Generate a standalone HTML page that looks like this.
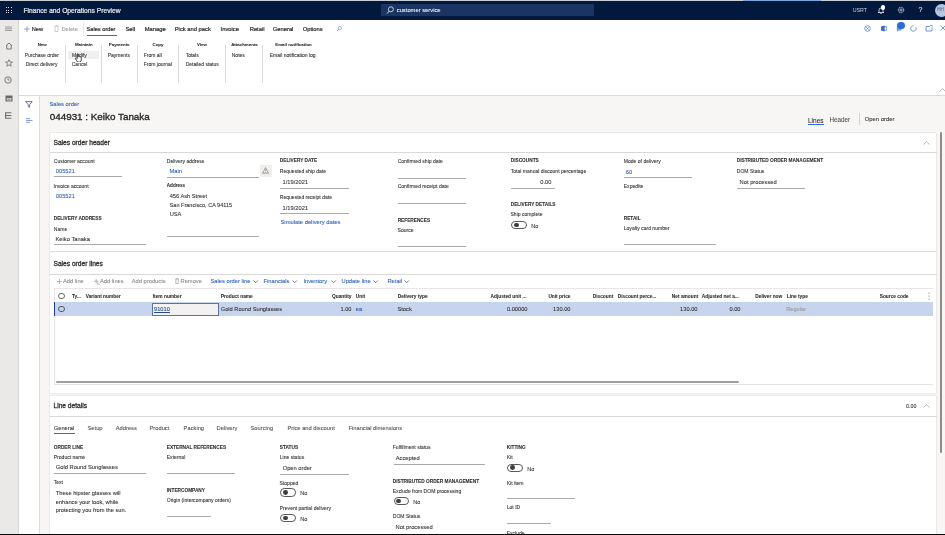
<!DOCTYPE html>
<html><head><meta charset="utf-8"><title>Sales order</title>
<style>
html,body{margin:0;padding:0;}
body{width:945px;height:535px;overflow:hidden;position:relative;font-family:"Liberation Sans",sans-serif;background:#f7f6f5;}
.t{position:absolute;white-space:nowrap;-webkit-text-stroke:0.08px currentColor;}
.r{position:absolute;}
.w{position:absolute;left:0;top:0;width:945px;height:535px;overflow:hidden;will-change:transform;}
</style></head><body>
<div class="w">
<div class="r" style="left:0px;top:0px;width:945px;height:535px;background:#f7f6f5;"></div>
<div class="r" style="left:0px;top:0px;width:945px;height:1px;background:#c9cdd4;"></div>
<div class="r" style="left:743px;top:0px;width:78px;height:1px;background:#7aa6dc;"></div>
<div class="r" style="left:0px;top:1px;width:945px;height:18.6px;background:#02183c;"></div>
<div class="r" style="left:0px;top:19.6px;width:18.6px;height:515.4px;background:#eae9e8;border-right:0.7px solid #d6d5d4;box-sizing:border-box"></div>
<div class="r" style="left:18.6px;top:19.6px;width:926.4px;height:75.7px;background:#ffffff;"></div>
<div class="r" style="left:18.6px;top:95px;width:926.4px;height:1px;background:#dddcdb;"></div>
<div class="r" style="left:18.6px;top:95.9px;width:20.4px;height:439.1px;background:#ffffff;"></div>
<div class="r" style="left:38.9px;top:95.9px;width:0.8px;height:439.1px;background:#dcdbda;"></div>
<div class="r" style="left:5.6px;top:7.4px;width:1.1px;height:1.1px;background:#d8dce4;"></div>
<div class="r" style="left:5.6px;top:9.9px;width:1.1px;height:1.1px;background:#d8dce4;"></div>
<div class="r" style="left:5.6px;top:12.4px;width:1.1px;height:1.1px;background:#d8dce4;"></div>
<div class="r" style="left:8.1px;top:7.4px;width:1.1px;height:1.1px;background:#d8dce4;"></div>
<div class="r" style="left:8.1px;top:9.9px;width:1.1px;height:1.1px;background:#d8dce4;"></div>
<div class="r" style="left:8.1px;top:12.4px;width:1.1px;height:1.1px;background:#d8dce4;"></div>
<div class="r" style="left:10.6px;top:7.4px;width:1.1px;height:1.1px;background:#d8dce4;"></div>
<div class="r" style="left:10.6px;top:9.9px;width:1.1px;height:1.1px;background:#d8dce4;"></div>
<div class="r" style="left:10.6px;top:12.4px;width:1.1px;height:1.1px;background:#d8dce4;"></div>
<div class="t" style="left:23.5px;top:6.91px;font-size:6.69px;line-height:8.7px;font-weight:400;color:#e4e8ef;-webkit-text-stroke:0.22px currentColor">Finance and Operations Preview</div>
<div class="r" style="left:381px;top:3.5px;width:213px;height:12.6px;background:#1a3563;border-radius:1px"></div>
<svg class="r" style="left:386px;top:6px" width="8" height="9" viewBox="0 0 8 9"><circle cx="4.9" cy="3.3" r="2.5" fill="none" stroke="#e8ecf3" stroke-width="0.8"/><line x1="3.1" y1="5.1" x2="1" y2="7.6" stroke="#e8ecf3" stroke-width="0.9"/></svg>
<div class="t" style="left:396.75px;top:6.91px;font-size:5.8px;line-height:7.54px;font-weight:400;color:#eef1f6;">customer service</div>
<div class="t" style="left:852.75px;top:7.28px;font-size:5.3px;line-height:6.89px;font-weight:400;color:#cfd4dd;-webkit-text-stroke:0">USRT</div>
<svg class="r" style="left:876.5px;top:5.5px" width="8" height="9" viewBox="0 0 8 9"><path d="M2 6.5 V4 a2 2 0 0 1 4 0 V6.5 H7 H1 Z" fill="none" stroke="#e8ecf3" stroke-width="0.8"/><path d="M3.3 7.5 h1.4" stroke="#e8ecf3" stroke-width="0.8"/></svg>
<div class="r" style="left:880.6px;top:5.0px;width:4.6px;height:4.6px;background:#ffffff;border-radius:50%"></div>
<svg class="r" style="left:897px;top:6px" width="8" height="8" viewBox="0 0 8 8"><circle cx="4" cy="4" r="2.7" fill="none" stroke="#e8ecf3" stroke-width="0.9" stroke-dasharray="1.2 0.5"/><circle cx="4" cy="4" r="1.1" fill="none" stroke="#e8ecf3" stroke-width="0.7"/></svg>
<div class="t" style="left:918.6px;top:5.17px;font-size:7px;line-height:9.1px;font-weight:400;color:#e8ecf3;">?</div>
<div class="r" style="left:934.5px;top:3.7px;width:13px;height:13px;background:#b8c6e0;border-radius:50%"></div>
<div class="t" style="left:937.3px;top:7.03px;font-size:4.6px;line-height:5.98px;font-weight:400;color:#5b6b8a;">HH</div>
<svg class="r" style="left:4.8px;top:25.5px" width="8" height="6" viewBox="0 0 8 6"><path d="M0 1.0 H7 M0 2.75 H7 M0 4.5 H7" stroke="#5f5e5d" stroke-width="0.55"/></svg>
<svg class="r" style="left:4.5px;top:41.5px" width="8" height="8" viewBox="0 0 8 8"><path d="M1 3.8 L4 1 L7 3.8 M1.8 3.2 V7 H6.2 V3.2" fill="none" stroke="#5f5e5d" stroke-width="0.8"/></svg>
<svg class="r" style="left:4.5px;top:59px" width="8" height="8" viewBox="0 0 8 8"><path d="M4 0.6 L5 3 L7.5 3.1 L5.5 4.7 L6.2 7.2 L4 5.8 L1.8 7.2 L2.5 4.7 L0.5 3.1 L3 3 Z" fill="none" stroke="#5f5e5d" stroke-width="0.7"/></svg>
<svg class="r" style="left:4.3px;top:76.4px" width="8" height="8" viewBox="0 0 8 8"><circle cx="4" cy="4" r="3.2" fill="none" stroke="#5f5e5d" stroke-width="0.8"/><path d="M4 2 V4 H5.6" fill="none" stroke="#5f5e5d" stroke-width="0.7"/></svg>
<svg class="r" style="left:4.5px;top:94.8px" width="8" height="7" viewBox="0 0 8 7"><rect x="0.5" y="0.5" width="7" height="6" fill="#6a6968"/><rect x="1.6" y="3" width="4.8" height="2.6" fill="#c9c8c7"/><path d="M2.5 4.3 H5" stroke="#6a6968" stroke-width="0.6"/></svg>
<svg class="r" style="left:4.8px;top:112.3px" width="7" height="7" viewBox="0 0 7 7"><path d="M0.6 0.3 V6.7 M0.6 0.8 H6.3 M0.6 3.5 H6.3 M0.6 6.2 H6.3" stroke="#5a5958" stroke-width="0.9"/></svg>
<svg class="r" style="left:25px;top:100.5px" width="8" height="7" viewBox="0 0 8 7"><path d="M0.6 0.6 H7.2 L4.6 3.6 V6.4 L3.2 5.6 V3.6 Z" fill="none" stroke="#3f5478" stroke-width="0.8"/></svg>
<svg class="r" style="left:25.8px;top:117.5px" width="7" height="6" viewBox="0 0 7 6"><path d="M0 0.7 H4.2 M0 2.5 H6.5 M0 4.3 H4" stroke="#8ea0d8" stroke-width="1.0"/></svg>
<div class="t" style="left:31.75px;top:26.11px;font-size:5.7px;line-height:7.41px;font-weight:400;color:#252423;-webkit-text-stroke:0.15px currentColor">New</div>
<svg class="r" style="left:23.5px;top:25.5px" width="6" height="6" viewBox="0 0 6 6"><path d="M3 0 V6 M0 3 H6" stroke="#6f83c9" stroke-width="0.7"/></svg>
<svg class="r" style="left:53.5px;top:25.3px" width="5" height="7" viewBox="0 0 5 7"><path d="M0.6 1.3 H4.4 M1 1.3 V6.5 H4 V1.3 M1.8 0.5 H3.2" fill="none" stroke="#b9b8b7" stroke-width="0.7"/></svg>
<div class="t" style="left:61.41px;top:26.11px;font-size:5.7px;line-height:7.41px;font-weight:400;color:#a19f9d;">Delete</div>
<div class="r" style="left:82.5px;top:22px;width:0.7px;height:14px;background:#e8e7e6;"></div>
<div class="t" style="left:86.54px;top:26.01px;font-size:5.67px;line-height:7.37px;font-weight:400;color:#252423;-webkit-text-stroke:0.18px currentColor">Sales order</div>
<div class="r" style="left:87.2px;top:35.2px;width:30px;height:1.1px;background:#2c6bd0;"></div>
<div class="t" style="left:125.5px;top:26.38px;font-size:5.8px;line-height:7.54px;font-weight:400;color:#252423;-webkit-text-stroke:0.18px currentColor">Sell</div>
<div class="t" style="left:144.75px;top:26.38px;font-size:5.8px;line-height:7.54px;font-weight:400;color:#252423;-webkit-text-stroke:0.18px currentColor">Manage</div>
<div class="t" style="left:174.75px;top:26.38px;font-size:5.8px;line-height:7.54px;font-weight:400;color:#252423;-webkit-text-stroke:0.18px currentColor">Pick and pack</div>
<div class="t" style="left:220.58px;top:26.38px;font-size:5.8px;line-height:7.54px;font-weight:400;color:#252423;-webkit-text-stroke:0.18px currentColor">Invoice</div>
<div class="t" style="left:249.71px;top:26.38px;font-size:5.8px;line-height:7.54px;font-weight:400;color:#252423;-webkit-text-stroke:0.18px currentColor">Retail</div>
<div class="t" style="left:272.79px;top:26.38px;font-size:5.8px;line-height:7.54px;font-weight:400;color:#252423;-webkit-text-stroke:0.18px currentColor">General</div>
<div class="t" style="left:302.71px;top:26.38px;font-size:5.8px;line-height:7.54px;font-weight:400;color:#252423;-webkit-text-stroke:0.18px currentColor">Options</div>
<svg class="r" style="left:335.5px;top:25.5px" width="6" height="6" viewBox="0 0 6 6"><circle cx="3.8" cy="2.2" r="1.7" fill="none" stroke="#5a7cc0" stroke-width="0.6"/><line x1="2.6" y1="3.4" x2="0.8" y2="5.2" stroke="#5a7cc0" stroke-width="0.7"/></svg>
<div class="t" style="left:-7.8px;width:100px;text-align:center;top:42.3px;font-size:4.4px;line-height:5.72px;font-weight:700;color:#323130;">New</div>
<div class="t" style="left:33.8px;width:100px;text-align:center;top:42.3px;font-size:4.4px;line-height:5.72px;font-weight:700;color:#323130;">Maintain</div>
<div class="t" style="left:69.2px;width:100px;text-align:center;top:42.3px;font-size:4.4px;line-height:5.72px;font-weight:700;color:#323130;">Payments</div>
<div class="t" style="left:108.0px;width:100px;text-align:center;top:42.3px;font-size:4.4px;line-height:5.72px;font-weight:700;color:#323130;">Copy</div>
<div class="t" style="left:152.0px;width:100px;text-align:center;top:42.3px;font-size:4.4px;line-height:5.72px;font-weight:700;color:#323130;">View</div>
<div class="t" style="left:194.5px;width:100px;text-align:center;top:42.3px;font-size:4.4px;line-height:5.72px;font-weight:700;color:#323130;">Attachments</div>
<div class="t" style="left:243.5px;width:100px;text-align:center;top:42.3px;font-size:4.4px;line-height:5.72px;font-weight:700;color:#323130;">Email notification</div>
<div class="r" style="left:65.2px;top:45px;width:0.6px;height:37.5px;background:#dcdbda;"></div>
<div class="r" style="left:101.2px;top:45px;width:0.6px;height:37.5px;background:#dcdbda;"></div>
<div class="r" style="left:136.7px;top:45px;width:0.6px;height:37.5px;background:#dcdbda;"></div>
<div class="r" style="left:178.4px;top:45px;width:0.6px;height:37.5px;background:#dcdbda;"></div>
<div class="r" style="left:225.1px;top:45px;width:0.6px;height:37.5px;background:#dcdbda;"></div>
<div class="r" style="left:262.2px;top:45px;width:0.6px;height:37.5px;background:#dcdbda;"></div>
<div class="r" style="left:68px;top:51px;width:31.2px;height:8.4px;background:#efefef;"></div>
<div class="t" style="left:24.75px;top:52.08px;font-size:5.0px;line-height:6.5px;font-weight:400;color:#323130;">Purchase order</div>
<div class="t" style="left:25.71px;top:61.2px;font-size:5.0px;line-height:6.5px;font-weight:400;color:#323130;">Direct delivery</div>
<div class="t" style="left:72.0px;top:52.08px;font-size:5.0px;line-height:6.5px;font-weight:400;color:#323130;">Modify</div>
<div class="t" style="left:71.75px;top:61.2px;font-size:5.0px;line-height:6.5px;font-weight:400;color:#323130;">Cancel</div>
<div class="t" style="left:107.75px;top:52.08px;font-size:5.0px;line-height:6.5px;font-weight:400;color:#323130;">Payments</div>
<div class="t" style="left:143.75px;top:52.08px;font-size:5.0px;line-height:6.5px;font-weight:400;color:#323130;">From all</div>
<div class="t" style="left:143.75px;top:61.2px;font-size:5.0px;line-height:6.5px;font-weight:400;color:#323130;">From journal</div>
<div class="t" style="left:185.67px;top:52.08px;font-size:5.0px;line-height:6.5px;font-weight:400;color:#323130;">Totals</div>
<div class="t" style="left:185.67px;top:61.2px;font-size:5.0px;line-height:6.5px;font-weight:400;color:#323130;">Detailed status</div>
<div class="t" style="left:231.75px;top:52.08px;font-size:5.0px;line-height:6.5px;font-weight:400;color:#323130;">Notes</div>
<div class="t" style="left:269.75px;top:52.08px;font-size:5.0px;line-height:6.5px;font-weight:400;color:#323130;">Email notification log</div>
<svg class="r" style="left:75px;top:53px" width="7.2" height="9" viewBox="0 0 14 17.5"><path d="M4.5 8 V1.8 Q5.5 0.2 6.5 1.8 V7 Q7.5 6 8.5 7 Q9.5 6.2 10.5 7.3 Q11.8 6.8 12.2 8.5 V13 Q12.2 16.5 9.7 17.6 H6 Q4 17 2.5 14 L1 10.5 Q1 9 2.5 9.5 L4.5 11 Z" fill="#fff" stroke="#2a2a2a" stroke-width="1.7"/></svg>
<svg class="r" style="left:863.5px;top:24.7px" width="7" height="7" viewBox="0 0 7 7"><circle cx="3.5" cy="3.5" r="2.8" fill="none" stroke="#3d6fc4" stroke-width="0.7"/><path d="M2.2 2.2 L4.8 4.8 M4.8 2.2 L2.2 4.8" stroke="#3d6fc4" stroke-width="0.6"/></svg>
<svg class="r" style="left:879.5px;top:24.5px" width="7" height="7" viewBox="0 0 7 7"><path d="M1 1.5 L4.5 0.6 V6.4 L1 5.5 Z" fill="#3d6fc4"/><rect x="4.5" y="1.4" width="2" height="4.2" fill="none" stroke="#3d6fc4" stroke-width="0.6"/></svg>
<svg class="r" style="left:895.5px;top:23.5px" width="8" height="9" viewBox="0 0 8 9"><path d="M0.8 2.5 H5.5 V6.5 H2.5 L1 8 V6.5 H0.8 Z" fill="#3d6fc4" opacity="0.7"/></svg>
<div class="r" style="left:897.3px;top:21.6px;width:7.4px;height:7.4px;background:#2f6bd4;border-radius:50%"></div>
<svg class="r" style="left:910px;top:24.5px" width="7" height="7" viewBox="0 0 7 7"><path d="M5.8 2.2 A2.7 2.7 0 1 1 3.5 0.8" fill="none" stroke="#3d6fc4" stroke-width="0.7"/></svg>
<svg class="r" style="left:925px;top:24.5px" width="8" height="7" viewBox="0 0 8 7"><path d="M5 1.5 H1 V6 H7 V3" fill="none" stroke="#3d6fc4" stroke-width="0.7"/><path d="M5 0.5 L7.2 0.5 L7.2 2.5" fill="none" stroke="#3d6fc4" stroke-width="0.6"/></svg>
<svg class="r" style="left:940px;top:25px" width="6" height="6" viewBox="0 0 6 6"><path d="M0.5 0.5 L5.5 5.5 M5.5 0.5 L0.5 5.5" stroke="#3d6fc4" stroke-width="0.7"/></svg>
<svg class="r" style="left:938.5px;top:87.5px" width="7" height="4" viewBox="0 0 7 4"><path d="M0.5 3.5 L3.5 0.7 L6.5 3.5" fill="none" stroke="#8a8886" stroke-width="0.6"/></svg>
<div class="t" style="left:49.5px;top:101.17px;font-size:5.8px;line-height:7.54px;font-weight:400;color:#2b5fb4;">Sales order</div>
<div class="t" style="left:49.75px;top:110.54px;font-size:9.85px;line-height:12.8px;font-weight:400;color:#252423;-webkit-text-stroke:0.32px currentColor">044931 : Keiko Tanaka</div>
<div class="t" style="left:808.0px;top:116.72px;font-size:6.5px;line-height:8.45px;font-weight:400;color:#323130;">Lines</div>
<div class="r" style="left:808.3px;top:124.2px;width:15.8px;height:0.9px;background:#2c6bd0;"></div>
<div class="t" style="left:829.5px;top:116.43px;font-size:6.3px;line-height:8.19px;font-weight:400;color:#54524f;">Header</div>
<div class="r" style="left:858.5px;top:113px;width:0.6px;height:12px;background:#d6d5d4;"></div>
<div class="t" style="left:864.79px;top:115.88px;font-size:5.85px;line-height:7.6px;font-weight:400;color:#323130;">Open order</div>
<div class="r" style="left:49.5px;top:132.5px;width:886.6px;height:118.6px;background:#fff;box-shadow:0 0 1px rgba(0,0,0,0.3)"></div>
<div class="r" style="left:49.5px;top:252.4px;width:886.6px;height:140.6px;background:#fff;box-shadow:0 0 1px rgba(0,0,0,0.3)"></div>
<div class="r" style="left:49.5px;top:395.5px;width:886.6px;height:150px;background:#fff;box-shadow:0 0 1px rgba(0,0,0,0.3)"></div>
<div class="r" style="left:940px;top:132px;width:2.4px;height:321px;background:#8d8c8b;border-radius:1px"></div>
<div class="t" style="left:53.5px;top:139.39px;font-size:6.64px;line-height:8.63px;font-weight:400;color:#323130;-webkit-text-stroke:0.3px currentColor">Sales order header</div>
<div class="r" style="left:49.5px;top:152px;width:887.0px;height:1px;background:#d9d8d7;"></div>
<svg class="r" style="left:923px;top:140.5px" width="7" height="4" viewBox="0 0 7 4"><path d="M0.5 3.5 L3.5 0.7 L6.5 3.5" fill="none" stroke="#8a8886" stroke-width="0.6"/></svg>
<div class="t" style="left:53.75px;top:157.6px;font-size:5.05px;line-height:6.57px;font-weight:400;color:#323130;">Customer account</div>
<div class="t" style="left:55.75px;top:168.2px;font-size:5.75px;line-height:7.48px;font-weight:400;color:#2b5fb4;">005521</div>
<div class="r" style="left:54px;top:176px;width:68px;height:1px;background:#acaaa9;"></div>
<div class="t" style="left:53.5px;top:183.05px;font-size:5.05px;line-height:6.57px;font-weight:400;color:#323130;">Invoice account</div>
<div class="t" style="left:55.75px;top:193.31px;font-size:5.75px;line-height:7.48px;font-weight:400;color:#2b5fb4;">005521</div>
<div class="t" style="left:53.75px;top:216.34px;font-size:4.75px;line-height:6.17px;font-weight:700;color:#323130;">DELIVERY ADDRESS</div>
<div class="t" style="left:53.75px;top:226.09px;font-size:5.05px;line-height:6.57px;font-weight:400;color:#323130;">Name</div>
<div class="t" style="left:55.5px;top:236.12px;font-size:5.75px;line-height:7.48px;font-weight:400;color:#323130;">Keiko Tanaka</div>
<div class="r" style="left:54px;top:244px;width:92px;height:1px;background:#acaaa9;"></div>
<div class="t" style="left:166.79px;top:157.6px;font-size:5.05px;line-height:6.57px;font-weight:400;color:#323130;">Delivery address</div>
<div class="t" style="left:169.5px;top:167.71px;font-size:5.75px;line-height:7.48px;font-weight:400;color:#2b5fb4;">Main</div>
<div class="r" style="left:167.4px;top:177px;width:91.6px;height:1px;background:#acaaa9;"></div>
<div class="r" style="left:259.5px;top:164.5px;width:12.5px;height:12.5px;background:#efeeed;"></div>
<svg class="r" style="left:262.2px;top:167.2px" width="7" height="7" viewBox="0 0 7 7"><path d="M3.5 0.6 L6.5 6.2 H0.5 Z" fill="none" stroke="#6b6a69" stroke-width="0.6"/><path d="M3.5 2.6 V4.4 M3.5 5 V5.5" stroke="#6b6a69" stroke-width="0.6"/></svg>
<div class="t" style="left:166.79px;top:182.68px;font-size:4.6px;line-height:5.98px;font-weight:700;color:#323130;">Address</div>
<div class="t" style="left:169.67px;top:192.62px;font-size:5.7px;line-height:7.41px;font-weight:400;color:#323130;">456 Ash Street</div>
<div class="t" style="left:169.62px;top:201.78px;font-size:5.55px;line-height:7.21px;font-weight:400;color:#323130;">San Francisco, CA 94115</div>
<div class="t" style="left:169.67px;top:210.6px;font-size:5.7px;line-height:7.41px;font-weight:400;color:#323130;">USA</div>
<div class="r" style="left:167.4px;top:236px;width:91.6px;height:1px;background:#acaaa9;"></div>
<div class="t" style="left:279.79px;top:157.85px;font-size:4.75px;line-height:6.17px;font-weight:700;color:#323130;">DELIVERY DATE</div>
<div class="t" style="left:279.79px;top:167.72px;font-size:5.05px;line-height:6.57px;font-weight:400;color:#323130;">Requested ship date</div>
<div class="t" style="left:282.58px;top:178.71px;font-size:5.75px;line-height:7.48px;font-weight:400;color:#323130;">1/19/2021</div>
<div class="r" style="left:280.4px;top:188px;width:68.3px;height:1px;background:#acaaa9;"></div>
<div class="t" style="left:279.79px;top:193.94px;font-size:5.05px;line-height:6.57px;font-weight:400;color:#323130;">Requested receipt date</div>
<div class="t" style="left:282.58px;top:204.5px;font-size:5.75px;line-height:7.48px;font-weight:400;color:#323130;">1/19/2021</div>
<div class="r" style="left:280.4px;top:213px;width:68.3px;height:1px;background:#acaaa9;"></div>
<div class="t" style="left:280.5px;top:218.55px;font-size:5.8px;line-height:7.54px;font-weight:400;color:#2b5fb4;">Simulate delivery dates</div>
<div class="t" style="left:397.67px;top:158.15px;font-size:5.05px;line-height:6.57px;font-weight:400;color:#323130;">Confirmed ship date</div>
<div class="r" style="left:397.7px;top:178px;width:68.1px;height:1px;background:#acaaa9;"></div>
<div class="t" style="left:397.67px;top:182.77px;font-size:5.05px;line-height:6.57px;font-weight:400;color:#323130;">Confirmed receipt date</div>
<div class="r" style="left:397.7px;top:203px;width:68.1px;height:1px;background:#acaaa9;"></div>
<div class="t" style="left:397.67px;top:217.88px;font-size:4.75px;line-height:6.17px;font-weight:700;color:#323130;">REFERENCES</div>
<div class="t" style="left:397.62px;top:226.86px;font-size:5.05px;line-height:6.57px;font-weight:400;color:#323130;">Source</div>
<div class="r" style="left:397.7px;top:246px;width:68.1px;height:1px;background:#acaaa9;"></div>
<div class="t" style="left:510.75px;top:157.55px;font-size:4.75px;line-height:6.17px;font-weight:700;color:#323130;">DISCOUNTS</div>
<div class="t" style="left:510.75px;top:167.83px;font-size:5.05px;line-height:6.57px;font-weight:400;color:#323130;">Total manual discount percentage</div>
<div class="t" style="right:393.5px;top:179.47px;font-size:5.75px;line-height:7.48px;font-weight:400;color:#323130;">0.00</div>
<div class="r" style="left:511px;top:188px;width:43.5px;height:1px;background:#acaaa9;"></div>
<div class="t" style="left:510.75px;top:201.94px;font-size:4.75px;line-height:6.17px;font-weight:700;color:#323130;">DELIVERY DETAILS</div>
<div class="t" style="left:510.5px;top:210.66px;font-size:5.05px;line-height:6.57px;font-weight:400;color:#323130;">Ship complete</div>
<div class="r" style="left:511px;top:220.8px;width:15.7px;height:8.4px;background:#fff;border:0.7px solid #5a5958;border-radius:4.2px;box-sizing:border-box"></div>
<div class="r" style="left:513.8px;top:222.6px;width:4.8px;height:4.8px;background:#3f3e3d;border-radius:50%"></div>
<div class="t" style="left:531.3px;top:222.81px;font-size:5.5px;line-height:7.15px;font-weight:400;color:#323130;">No</div>
<div class="t" style="left:623.75px;top:157.76px;font-size:5.05px;line-height:6.57px;font-weight:400;color:#323130;">Mode of delivery</div>
<div class="t" style="left:625.8px;top:168.99px;font-size:5.75px;line-height:7.48px;font-weight:400;color:#2b5fb4;">60</div>
<div class="r" style="left:624px;top:177px;width:68px;height:1px;background:#acaaa9;"></div>
<div class="t" style="left:623.75px;top:182.6px;font-size:5.05px;line-height:6.57px;font-weight:400;color:#323130;">Expedite</div>
<div class="t" style="left:623.75px;top:216.34px;font-size:4.75px;line-height:6.17px;font-weight:700;color:#323130;">RETAIL</div>
<div class="t" style="left:623.75px;top:225.39px;font-size:5.05px;line-height:6.57px;font-weight:400;color:#323130;">Loyalty card number</div>
<div class="r" style="left:624px;top:244px;width:92px;height:1px;background:#acaaa9;"></div>
<div class="t" style="left:736.75px;top:158.22px;font-size:4.75px;line-height:6.17px;font-weight:700;color:#323130;">DISTRIBUTED ORDER MANAGEMENT</div>
<div class="t" style="left:736.75px;top:167.51px;font-size:5.05px;line-height:6.57px;font-weight:400;color:#323130;">DOM Status</div>
<div class="t" style="left:739.62px;top:179.01px;font-size:5.75px;line-height:7.48px;font-weight:400;color:#323130;">Not processed</div>
<div class="r" style="left:737px;top:188px;width:68px;height:1px;background:#acaaa9;"></div>
<div class="t" style="left:53.5px;top:260.17px;font-size:6.64px;line-height:8.63px;font-weight:400;color:#323130;-webkit-text-stroke:0.3px currentColor">Sales order lines</div>
<div class="r" style="left:49.5px;top:274px;width:887.0px;height:1px;background:#d9d8d7;"></div>
<svg class="r" style="left:57px;top:279px" width="5" height="5" viewBox="0 0 5 5"><path d="M2.5 0 V5 M0 2.5 H5" stroke="#8c8a88" stroke-width="0.6"/></svg>
<div class="t" style="left:63.0px;top:277.96px;font-size:5.75px;line-height:7.48px;font-weight:400;color:#8c8a88;">Add line</div>
<svg class="r" style="left:93.5px;top:278.5px" width="6" height="6" viewBox="0 0 6 6"><path d="M2.2 0 V4.4 M0 2.2 H4.4 M3.6 3.4 V5.3 H5.8" fill="none" stroke="#8c8a88" stroke-width="0.6"/></svg>
<div class="t" style="left:100.0px;top:277.96px;font-size:5.75px;line-height:7.48px;font-weight:400;color:#8c8a88;">Add lines</div>
<div class="t" style="left:131.75px;top:277.96px;font-size:5.75px;line-height:7.48px;font-weight:400;color:#8c8a88;">Add products</div>
<svg class="r" style="left:174.5px;top:278.2px" width="4" height="6" viewBox="0 0 4 6"><path d="M0.4 1 H3.6 M0.8 1 V5.6 H3.2 V1 M1.3 0.4 H2.7" fill="none" stroke="#8c8a88" stroke-width="0.6"/></svg>
<div class="t" style="left:180.5px;top:277.96px;font-size:5.75px;line-height:7.48px;font-weight:400;color:#8c8a88;">Remove</div>
<div class="t" style="left:210.5px;top:277.96px;font-size:5.75px;line-height:7.48px;font-weight:400;color:#2b5fb4;">Sales order line</div>
<svg class="r" style="left:253.2px;top:279.7px" width="5.4" height="3.4" viewBox="0 0 5.4 3.4"><path d="M0.5 0.5 L2.7 2.7 L4.9 0.5" fill="none" stroke="#5f5e5d" stroke-width="0.8"/></svg>
<div class="t" style="left:263.5px;top:277.96px;font-size:5.75px;line-height:7.48px;font-weight:400;color:#2b5fb4;">Financials</div>
<svg class="r" style="left:292.2px;top:279.7px" width="5.4" height="3.4" viewBox="0 0 5.4 3.4"><path d="M0.5 0.5 L2.7 2.7 L4.9 0.5" fill="none" stroke="#5f5e5d" stroke-width="0.8"/></svg>
<div class="t" style="left:303.41px;top:277.96px;font-size:5.75px;line-height:7.48px;font-weight:400;color:#2b5fb4;">Inventory</div>
<svg class="r" style="left:331.2px;top:279.7px" width="5.4" height="3.4" viewBox="0 0 5.4 3.4"><path d="M0.5 0.5 L2.7 2.7 L4.9 0.5" fill="none" stroke="#5f5e5d" stroke-width="0.8"/></svg>
<div class="t" style="left:341.5px;top:277.96px;font-size:5.75px;line-height:7.48px;font-weight:400;color:#2b5fb4;">Update line</div>
<svg class="r" style="left:373.2px;top:279.7px" width="5.4" height="3.4" viewBox="0 0 5.4 3.4"><path d="M0.5 0.5 L2.7 2.7 L4.9 0.5" fill="none" stroke="#5f5e5d" stroke-width="0.8"/></svg>
<div class="t" style="left:387.46px;top:277.96px;font-size:5.75px;line-height:7.48px;font-weight:400;color:#2b5fb4;">Retail</div>
<svg class="r" style="left:404.40000000000003px;top:279.7px" width="5.4" height="3.4" viewBox="0 0 5.4 3.4"><path d="M0.5 0.5 L2.7 2.7 L4.9 0.5" fill="none" stroke="#5f5e5d" stroke-width="0.8"/></svg>
<div class="r" style="left:54px;top:288px;width:878.5px;height:1px;background:#e8e7e6;"></div>
<div class="r" style="left:58.4px;top:292.6px;width:6.6px;height:6.6px;background:#fff;border:0.6px solid #6b6a69;border-radius:50%;box-sizing:border-box"></div>
<div class="t" style="left:72.0px;top:294.08px;font-size:4.8px;line-height:6.24px;font-weight:700;color:#323130;">Ty...</div>
<div class="t" style="left:85.75px;top:294.08px;font-size:4.8px;line-height:6.24px;font-weight:700;color:#323130;">Variant number</div>
<div class="t" style="left:152.75px;top:294.08px;font-size:4.8px;line-height:6.24px;font-weight:700;color:#323130;">Item number</div>
<div class="t" style="left:220.75px;top:294.08px;font-size:4.8px;line-height:6.24px;font-weight:700;color:#323130;">Product name</div>
<div class="t" style="right:593.5px;top:294.08px;font-size:4.8px;line-height:6.24px;font-weight:700;color:#323130;">Quantity</div>
<div class="t" style="left:355.75px;top:294.08px;font-size:4.8px;line-height:6.24px;font-weight:700;color:#323130;">Unit</div>
<div class="t" style="left:397.75px;top:294.08px;font-size:4.8px;line-height:6.24px;font-weight:700;color:#323130;">Delivery type</div>
<div class="t" style="right:418.5px;top:294.08px;font-size:4.8px;line-height:6.24px;font-weight:700;color:#323130;">Adjusted unit ...</div>
<div class="t" style="right:374.5px;top:294.08px;font-size:4.8px;line-height:6.24px;font-weight:700;color:#323130;">Unit price</div>
<div class="t" style="right:331.75px;top:294.08px;font-size:4.8px;line-height:6.24px;font-weight:700;color:#323130;">Discount</div>
<div class="t" style="left:617.75px;top:294.08px;font-size:4.8px;line-height:6.24px;font-weight:700;color:#323130;">Discount perce...</div>
<div class="t" style="right:246.75px;top:294.08px;font-size:4.8px;line-height:6.24px;font-weight:700;color:#323130;">Net amount</div>
<div class="t" style="left:701.75px;top:294.08px;font-size:4.8px;line-height:6.24px;font-weight:700;color:#323130;">Adjusted net a...</div>
<div class="t" style="right:162.75px;top:294.08px;font-size:4.8px;line-height:6.24px;font-weight:700;color:#323130;">Deliver now</div>
<div class="t" style="left:786.75px;top:294.08px;font-size:4.8px;line-height:6.24px;font-weight:700;color:#323130;">Line type</div>
<div class="t" style="left:879.71px;top:294.08px;font-size:4.8px;line-height:6.24px;font-weight:700;color:#323130;">Source code</div>
<svg class="r" style="left:928.2px;top:292px" width="2" height="8" viewBox="0 0 2 8"><circle cx="1" cy="1" r="0.5" fill="#555"/><circle cx="1" cy="4" r="0.5" fill="#555"/><circle cx="1" cy="7" r="0.5" fill="#555"/></svg>
<div class="r" style="left:54px;top:288.4px;width:0.6px;height:96.6px;background:#e6e5e4;"></div>
<div class="r" style="left:54px;top:302px;width:878.5px;height:14px;background:#c6d4ed;"></div>
<div class="r" style="left:54px;top:302px;width:1.4px;height:14px;background:#1c3f9c;"></div>
<div class="r" style="left:58.4px;top:305.7px;width:6.6px;height:6.6px;background:transparent;border:0.6px solid #55595f;border-radius:50%;box-sizing:border-box"></div>
<div class="r" style="left:151.5px;top:302.5px;width:67.2px;height:13px;background:#f3f1f1;border:0.6px solid #5d7399;box-sizing:border-box"></div>
<div class="t" style="left:154.05px;top:305.96px;font-size:5.7px;line-height:7.41px;font-weight:400;color:#23488c;text-decoration:underline">91010</div>
<div class="t" style="left:220.75px;top:305.88px;font-size:5.7px;line-height:7.41px;font-weight:400;color:#323130;">Gold Round Sunglasses</div>
<div class="t" style="right:593.5px;top:305.88px;font-size:5.7px;line-height:7.41px;font-weight:400;color:#323130;">1.00</div>
<div class="t" style="left:355.75px;top:305.6px;font-size:5.7px;line-height:7.41px;font-weight:400;color:#2752a8;">ea</div>
<div class="t" style="left:397.5px;top:305.88px;font-size:5.7px;line-height:7.41px;font-weight:400;color:#323130;">Stock</div>
<div class="t" style="right:417.5px;top:305.88px;font-size:5.7px;line-height:7.41px;font-weight:400;color:#323130;">0.00000</div>
<div class="t" style="right:374.5px;top:305.88px;font-size:5.7px;line-height:7.41px;font-weight:400;color:#323130;">130.00</div>
<div class="t" style="right:247.5px;top:305.88px;font-size:5.7px;line-height:7.41px;font-weight:400;color:#323130;">130.00</div>
<div class="t" style="right:204.5px;top:305.88px;font-size:5.7px;line-height:7.41px;font-weight:400;color:#323130;">0.00</div>
<div class="t" style="left:786.2px;top:305.88px;font-size:5.7px;line-height:7.41px;font-weight:400;color:#9a9998;">Regular</div>
<div class="r" style="left:54px;top:384px;width:878.5px;height:1px;background:#e3e2e1;"></div>
<div class="r" style="left:55.5px;top:380.5px;width:683px;height:2.8px;background:#a09f9e;border-radius:1px"></div>
<div class="t" style="left:53.5px;top:402.47px;font-size:6.64px;line-height:8.63px;font-weight:400;color:#323130;-webkit-text-stroke:0.3px currentColor">Line details</div>
<div class="t" style="right:28.64px;top:402.53px;font-size:5.3px;line-height:6.89px;font-weight:400;color:#323130;">0.00</div>
<svg class="r" style="left:923px;top:404px" width="7" height="4" viewBox="0 0 7 4"><path d="M0.5 3.5 L3.5 0.7 L6.5 3.5" fill="none" stroke="#8a8886" stroke-width="0.6"/></svg>
<div class="r" style="left:49.5px;top:416px;width:887.0px;height:1px;background:#d9d8d7;"></div>
<div class="t" style="left:53.75px;top:424.9px;font-size:5.75px;line-height:7.48px;font-weight:400;color:#323130;">General</div>
<div class="r" style="left:54px;top:433.4px;width:20.5px;height:1px;background:#2c6bd0;"></div>
<div class="t" style="left:87.5px;top:424.9px;font-size:5.75px;line-height:7.48px;font-weight:400;color:#54524f;">Setup</div>
<div class="t" style="left:115.75px;top:424.9px;font-size:5.75px;line-height:7.48px;font-weight:400;color:#54524f;">Address</div>
<div class="t" style="left:149.5px;top:424.9px;font-size:5.75px;line-height:7.48px;font-weight:400;color:#54524f;">Product</div>
<div class="t" style="left:183.62px;top:424.9px;font-size:5.75px;line-height:7.48px;font-weight:400;color:#54524f;">Packing</div>
<div class="t" style="left:216.5px;top:424.9px;font-size:5.75px;line-height:7.48px;font-weight:400;color:#54524f;">Delivery</div>
<div class="t" style="left:250.5px;top:424.9px;font-size:5.75px;line-height:7.48px;font-weight:400;color:#54524f;">Sourcing</div>
<div class="t" style="left:287.46px;top:424.9px;font-size:5.75px;line-height:7.48px;font-weight:400;color:#54524f;">Price and discount</div>
<div class="t" style="left:348.46px;top:424.9px;font-size:5.75px;line-height:7.48px;font-weight:400;color:#54524f;">Financial dimensions</div>
<div class="t" style="left:53.75px;top:445.07px;font-size:4.75px;line-height:6.17px;font-weight:700;color:#323130;">ORDER LINE</div>
<div class="t" style="left:53.75px;top:454.01px;font-size:5.05px;line-height:6.57px;font-weight:400;color:#323130;">Product name</div>
<div class="t" style="left:55.75px;top:464.39px;font-size:5.75px;line-height:7.48px;font-weight:400;color:#323130;">Gold Round Sunglasses</div>
<div class="r" style="left:54px;top:473px;width:92px;height:1px;background:#acaaa9;"></div>
<div class="t" style="left:53.75px;top:478.92px;font-size:5.05px;line-height:6.57px;font-weight:400;color:#323130;">Text</div>
<div class="t" style="left:55.75px;top:490.33px;font-size:5.7px;line-height:7.41px;font-weight:400;color:#323130;">These hipster glasses will</div>
<div class="t" style="left:55.75px;top:498.53px;font-size:5.7px;line-height:7.41px;font-weight:400;color:#323130;">enhance your look, while</div>
<div class="t" style="left:55.75px;top:506.54px;font-size:5.7px;line-height:7.41px;font-weight:400;color:#323130;">protecting you from the sun.</div>
<div class="t" style="left:166.75px;top:444.58px;font-size:4.75px;line-height:6.17px;font-weight:700;color:#323130;">EXTERNAL REFERENCES</div>
<div class="t" style="left:166.75px;top:453.56px;font-size:5.05px;line-height:6.57px;font-weight:400;color:#323130;">External</div>
<div class="r" style="left:167px;top:473px;width:68px;height:1px;background:#acaaa9;"></div>
<div class="t" style="left:166.75px;top:488.11px;font-size:4.75px;line-height:6.17px;font-weight:700;color:#323130;">INTERCOMPANY</div>
<div class="t" style="left:166.75px;top:497.49px;font-size:5.05px;line-height:6.57px;font-weight:400;color:#323130;">Origin (intercompany orders)</div>
<div class="r" style="left:167px;top:516px;width:44px;height:1px;background:#acaaa9;"></div>
<div class="t" style="left:279.75px;top:444.57px;font-size:4.75px;line-height:6.17px;font-weight:700;color:#323130;">STATUS</div>
<div class="t" style="left:279.75px;top:453.74px;font-size:5.05px;line-height:6.57px;font-weight:400;color:#323130;">Line status</div>
<div class="t" style="left:282.67px;top:464.88px;font-size:5.75px;line-height:7.48px;font-weight:400;color:#323130;">Open order</div>
<div class="r" style="left:280px;top:474px;width:68.6px;height:1px;background:#acaaa9;"></div>
<div class="t" style="left:279.5px;top:480.06px;font-size:5.05px;line-height:6.57px;font-weight:400;color:#323130;">Stopped</div>
<div class="r" style="left:280px;top:488.3px;width:15.7px;height:8.4px;background:#fff;border:0.7px solid #5a5958;border-radius:4.2px;box-sizing:border-box"></div>
<div class="r" style="left:282.8px;top:490.1px;width:4.8px;height:4.8px;background:#3f3e3d;border-radius:50%"></div>
<div class="t" style="left:300.3px;top:489.56px;font-size:5.5px;line-height:7.15px;font-weight:400;color:#323130;">No</div>
<div class="t" style="left:279.75px;top:505.4px;font-size:5.05px;line-height:6.57px;font-weight:400;color:#323130;">Prevent partial delivery</div>
<div class="r" style="left:280px;top:513.8px;width:15.7px;height:8.4px;background:#fff;border:0.7px solid #5a5958;border-radius:4.2px;box-sizing:border-box"></div>
<div class="r" style="left:282.8px;top:515.6px;width:4.8px;height:4.8px;background:#3f3e3d;border-radius:50%"></div>
<div class="t" style="left:300.3px;top:515.8px;font-size:5.5px;line-height:7.15px;font-weight:400;color:#323130;">No</div>
<div class="t" style="left:392.75px;top:443.62px;font-size:5.05px;line-height:6.57px;font-weight:400;color:#323130;">Fulfillment status</div>
<div class="t" style="left:395.75px;top:454.5px;font-size:5.75px;line-height:7.48px;font-weight:400;color:#323130;">Accepted</div>
<div class="r" style="left:393.5px;top:464px;width:91.5px;height:1px;background:#acaaa9;"></div>
<div class="t" style="left:392.75px;top:479.27px;font-size:4.75px;line-height:6.17px;font-weight:700;color:#323130;">DISTRIBUTED ORDER MANAGEMENT</div>
<div class="t" style="left:392.75px;top:487.95px;font-size:5.05px;line-height:6.57px;font-weight:400;color:#323130;">Exclude from DOM processing</div>
<div class="r" style="left:393.5px;top:496.8px;width:15.7px;height:8.4px;background:#fff;border:0.7px solid #5a5958;border-radius:4.2px;box-sizing:border-box"></div>
<div class="r" style="left:396.3px;top:498.6px;width:4.8px;height:4.8px;background:#3f3e3d;border-radius:50%"></div>
<div class="t" style="left:413.3px;top:498.56px;font-size:5.5px;line-height:7.15px;font-weight:400;color:#323130;">No</div>
<div class="t" style="left:392.75px;top:512.63px;font-size:5.05px;line-height:6.57px;font-weight:400;color:#323130;">DOM Status</div>
<div class="t" style="left:395.5px;top:523.97px;font-size:5.75px;line-height:7.48px;font-weight:400;color:#323130;">Not processed</div>
<div class="t" style="left:506.75px;top:444.57px;font-size:4.75px;line-height:6.17px;font-weight:700;color:#323130;">KITTING</div>
<div class="t" style="left:506.75px;top:454.13px;font-size:5.05px;line-height:6.57px;font-weight:400;color:#323130;">Kit</div>
<div class="r" style="left:507px;top:463.6px;width:15.7px;height:8.4px;background:#fff;border:0.7px solid #5a5958;border-radius:4.2px;box-sizing:border-box"></div>
<div class="r" style="left:509.8px;top:465.4px;width:4.8px;height:4.8px;background:#3f3e3d;border-radius:50%"></div>
<div class="t" style="left:527.3px;top:465.68px;font-size:5.5px;line-height:7.15px;font-weight:400;color:#323130;">No</div>
<div class="t" style="left:506.75px;top:479.71px;font-size:5.05px;line-height:6.57px;font-weight:400;color:#323130;">Kit item</div>
<div class="r" style="left:507px;top:498px;width:68px;height:1px;background:#acaaa9;"></div>
<div class="t" style="left:506.75px;top:504.02px;font-size:5.05px;line-height:6.57px;font-weight:400;color:#323130;">Lot ID</div>
<div class="r" style="left:507px;top:523px;width:43.5px;height:1px;background:#acaaa9;"></div>
<div class="t" style="left:506.7px;top:530.31px;font-size:5.05px;line-height:6.57px;font-weight:400;color:#323130;">Exclude</div>
<div class="r" style="left:0px;top:533.6px;width:945px;height:1.4px;background:#0a0a0a;"></div>
</div>
</body></html>
